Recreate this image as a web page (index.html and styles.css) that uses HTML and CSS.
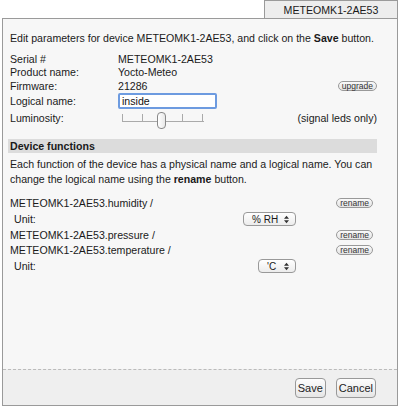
FILE: index.html
```html
<!DOCTYPE html>
<html>
<head>
<meta charset="utf-8">
<link rel="stylesheet" href="styles.css">
</head>
<body>
<div class="tabbar"><div class="tab">METEOMK1-2AE53</div></div>
<div class="dialog">
  <div class="content">
    <p class="intro">Edit parameters for device METEOMK1-2AE53, and click on the <b>Save</b> button.</p>
    <div class="props">
      <div class="row"><span class="lbl">Serial #</span><span class="val">METEOMK1-2AE53</span></div>
      <div class="row"><span class="lbl">Product name:</span><span class="val">Yocto-Meteo</span></div>
      <div class="row"><span class="lbl">Firmware:</span><span class="val">21286</span><button class="mini">upgrade</button></div>
      <div class="row rin"><span class="lbl">Logical name:</span><span class="val"><input class="txt" type="text" value="inside"></span></div>
      <div class="row rsl"><span class="lbl">Luminosity:</span>
        <span class="slider">
          <span class="track"></span>
          <span class="tick t0"></span><span class="tick t1"></span><span class="tick t3"></span><span class="tick t4"></span>
          <span class="thumb"></span>
        </span>
        <span class="note">(signal leds only)</span></div>
    </div>
    <div class="sect">Device functions</div>
    <p class="desc">Each function of the device has a physical name and a logical name. You can change the logical name using the <span class="strong">rename</span> button.</p>
    <div class="funcs">
      <div class="frow"><span>METEOMK1-2AE53.humidity /</span><button class="mini">rename</button></div>
      <div class="urow"><span class="ulbl">Unit:</span><span class="sel s1">% RH<span class="arr"><svg width="5" height="9" viewBox="0 0 6 9"><path d="M3 0L6 3.5H0Z M3 9L6 5.5H0Z" fill="#333"/></svg></span></span></div>
      <div class="frow"><span>METEOMK1-2AE53.pressure /</span><button class="mini">rename</button></div>
      <div class="frow"><span>METEOMK1-2AE53.temperature /</span><button class="mini">rename</button></div>
      <div class="urow"><span class="ulbl">Unit:</span><span class="sel s2">'C<span class="arr"><svg width="5" height="9" viewBox="0 0 6 9"><path d="M3 0L6 3.5H0Z M3 9L6 5.5H0Z" fill="#333"/></svg></span></span></div>
    </div>
  </div>
  <div class="footer">
    <button class="btn">Save</button>
    <button class="btn">Cancel</button>
  </div>
</div>
</body>
</html>
```
FILE: styles.css
```css
html, body { margin: 0; padding: 0; background: #fff; }
body { font-family: "Liberation Sans", Arial, sans-serif; font-size: 10.6px; color: #1a1a1a; width: 400px; height: 408px; overflow: hidden; }
.tabbar { display: flex; justify-content: flex-end; height: 18px; padding-right: 2px; }
.tab { width: 132px; height: 17px; border: 1px solid #9a9a9a; border-bottom: none; background: #ededed; text-align: center; line-height: 18px; font-size: 10.6px; }
.dialog { margin: 0 2px; height: 388px; border: 1px solid #9a9a9a; background: #f7f7f7; display: flex; flex-direction: column; box-sizing: border-box; }
.content { flex: 1; padding: 12px 20px 0 7px; }
.intro { margin: 0 0 7px 0; line-height: 14px; }
.props { display: flex; flex-direction: column; }
.row { display: flex; align-items: center; height: 13.5px; }
.lbl { width: 108px; flex: none; }
.val { flex: 1; }
.rin { height: 17px; }
.rsl { height: 17px; }
.txt { width: 91px; height: 12px; box-sizing: content-box; border: 2px solid #6d9be0; border-radius: 2px; padding: 0 2px; font: 10.6px "Liberation Sans", Arial, sans-serif; background: #fff; outline: none; margin: 0; color: #111; }
.mini { font: 8.5px "Liberation Sans", Arial, sans-serif; color: #333; background: linear-gradient(#fafafa, #e4e4e4); border: 1px solid #999; border-radius: 6px; padding: 0 3px; height: 10px; line-height: 8px; margin: 0; }
.slider { position: relative; width: 82px; height: 17px; flex: none; margin-left: 4px; }
.track { position: absolute; left: 0; right: 0; top: 11px; height: 1px; background: #aaa; }
.tick { position: absolute; top: 4px; width: 1px; height: 8px; background: #aaa; }
.t0 { left: 0; } .t1 { left: 20px; } .t3 { left: 60px; } .t4 { left: 80px; }
.thumb { position: absolute; left: 35px; top: 2px; border: 1px solid #888; border-radius: 4px; background: linear-gradient(90deg, #fff, #e8e8e8); box-sizing: border-box; width: 9px; height: 17px; }
.note { margin-left: auto; }
.sect { margin: 12px 0 0 -2px; background: #dcdcdc; font-weight: bold; height: 14px; line-height: 14px; padding-left: 2px; }
.desc { margin: 4px 0 9px 0; line-height: 15px; }
.strong { font-weight: bold; }
.funcs { display: flex; flex-direction: column; }
.frow { display: flex; align-items: center; justify-content: space-between; height: 15px; padding-right: 4px; }
.urow { display: flex; align-items: center; height: 17px; }
.ulbl { width: 100px; padding-left: 4px; box-sizing: border-box; flex: none; }
.sel { display: inline-flex; align-items: center; justify-content: space-between; height: 14px; border: 1px solid #999; border-radius: 4px; background: linear-gradient(#fff, #ececec); font-size: 10px; padding: 0 6px 0 8px; box-sizing: border-box; }
.s1 { margin-left: 133px; width: 53px; }
.s2 { margin-left: 148px; width: 38px; }
.arr { display: inline-flex; }
.footer { height: 35px; border-top: 1px dashed #bbb; background: #efefef; display: flex; justify-content: flex-end; align-items: center; gap: 10px; padding-right: 21px; }
.btn { font: 11px "Liberation Sans", Arial, sans-serif; color: #222; height: 20px; padding: 0 2px; border: 1px solid #999; border-radius: 4px; background: linear-gradient(#fdfdfd, #e6e6e6); margin: 0; }
```
